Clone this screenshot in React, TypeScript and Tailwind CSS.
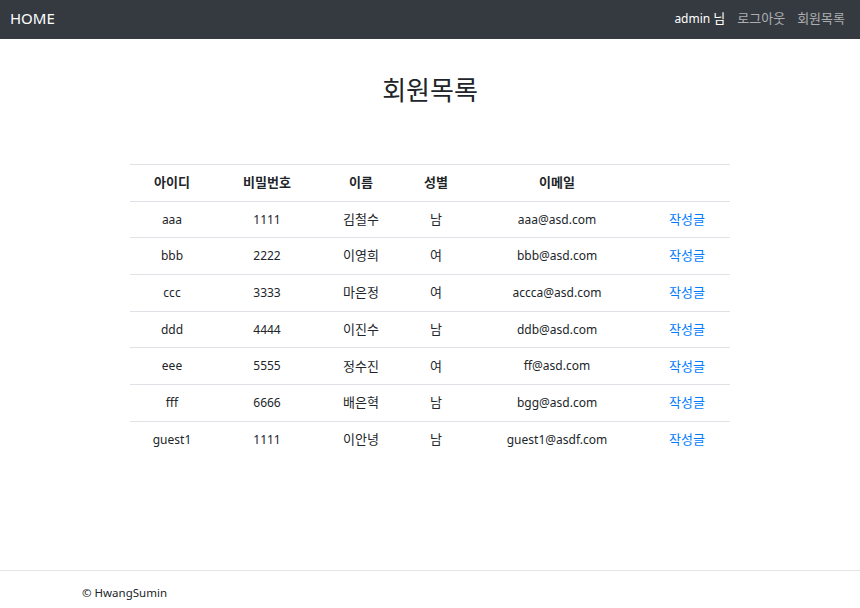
import React from "react";

type Member = {
  id: string;
  pw: string;
  name: string;
  gender: string;
  email: string;
};

const members: Member[] = [
  { id: "aaa", pw: "1111", name: "김철수", gender: "남", email: "aaa@asd.com" },
  { id: "bbb", pw: "2222", name: "이영희", gender: "여", email: "bbb@asd.com" },
  { id: "ccc", pw: "3333", name: "마은정", gender: "여", email: "accca@asd.com" },
  { id: "ddd", pw: "4444", name: "이진수", gender: "남", email: "ddb@asd.com" },
  { id: "eee", pw: "5555", name: "정수진", gender: "여", email: "ff@asd.com" },
  { id: "fff", pw: "6666", name: "배은혁", gender: "남", email: "bgg@asd.com" },
  { id: "guest1", pw: "1111", name: "이안녕", gender: "남", email: "guest1@asdf.com" },
];

const font = "font-['Noto_Sans','Noto_Sans_CJK_KR',sans-serif]";

// hangul in Noto CJK runs a bit narrow, so korean text gets a slightly bigger size
const ko = "text-[13px]";

export default function App() {
  return (
    <div className={`flex min-h-[608px] flex-col bg-white text-[#212529] ${font}`}>
      {/* navbar */}
      <nav className="flex h-[39px] items-center justify-between bg-[#343a40] pb-[3px] pl-[10px] pr-[15px]">
        <a className="text-[15px] leading-[20px] text-white">HOME</a>
        <div className="flex items-center gap-[12px] text-[12px] leading-[16px]">
          <span className="text-white">
            admin <span className={ko}>님</span>
          </span>
          <a className={`${ko} text-white/60`}>로그아웃</a>
          <a className={`${ko} text-white/60`}>회원목록</a>
        </div>
      </nav>

      <main className="flex-1">
        <h1 className="mt-[35px] text-center text-[26px] leading-[32px]">회원목록</h1>

        <table className="mx-auto mt-[58px] w-[600px] border-collapse text-center text-[12px]">
          <colgroup>
            <col className="w-[84px]" />
            <col className="w-[106px]" />
            <col className="w-[82px]" />
            <col className="w-[68px]" />
            <col className="w-[174px]" />
            <col className="w-[86px]" />
          </colgroup>
          <thead>
            <tr className={`h-[36.7px] border-t border-[#dee2e6] font-bold ${ko}`}>
              <th>아이디</th>
              <th>비밀번호</th>
              <th>이름</th>
              <th>성별</th>
              <th>이메일</th>
              <th></th>
            </tr>
          </thead>
          <tbody>
            {members.map((m) => (
              <tr key={m.id} className="h-[36.7px] border-t border-[#dee2e6]">
                <td>{m.id}</td>
                <td>{m.pw}</td>
                <td className={ko}>{m.name}</td>
                <td className={ko}>{m.gender}</td>
                <td>{m.email}</td>
                <td className={ko}>
                  <a className="text-[#007bff]">작성글</a>
                </td>
              </tr>
            ))}
          </tbody>
        </table>
      </main>

      <footer className="flex h-[38px] items-center border-t border-[#e5e5e5] px-[82px] pt-[6px] text-[11.5px]">
        © HwangSumin
      </footer>
    </div>
  );
}
